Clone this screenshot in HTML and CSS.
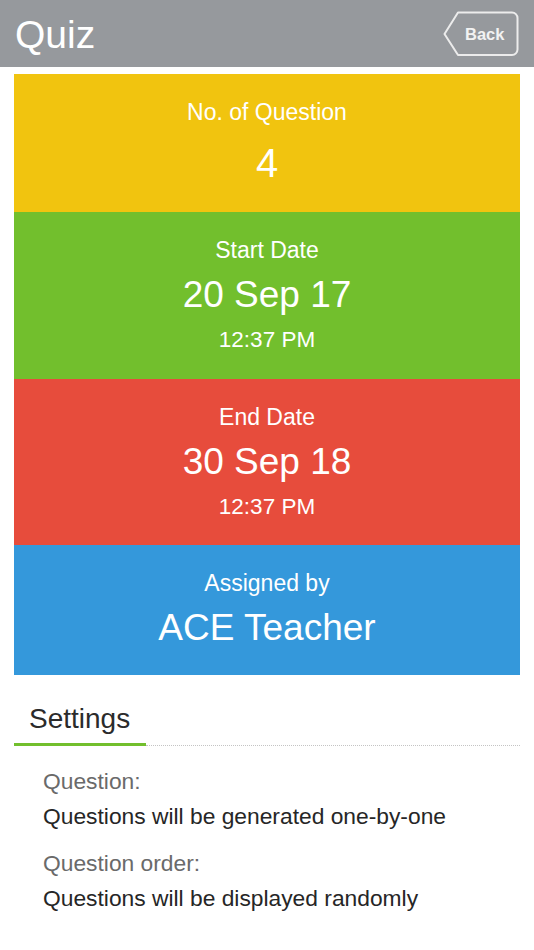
FILE: index.html
```html
<!DOCTYPE html>
<html>
<head>
<meta charset="utf-8">
<link rel="stylesheet" href="styles.css">
</head>
<body>
<header class="topbar">
  <h1 class="title">Quiz</h1>
  <div class="back">
    <svg class="back-shape" width="76" height="46" viewBox="0 0 76 46">
      <path d="M15 1.5 H69 a5.5 5.5 0 0 1 5.5 5.5 V38.5 a5.5 5.5 0 0 1 -5.5 5.5 H15 L1.5 23 Z" fill="none" stroke="#ececec" stroke-width="2" stroke-linejoin="round"/>
    </svg>
    <span class="back-text">Back</span>
  </div>
</header>
<main class="content">
  <section class="card card-yellow">
    <div class="card-label">No. of Question</div>
    <div class="card-value card-value-count">4</div>
  </section>
  <section class="card card-green">
    <div class="card-label">Start Date</div>
    <div class="card-value">20 Sep 17</div>
    <div class="card-time">12:37 PM</div>
  </section>
  <section class="card card-red">
    <div class="card-label">End Date</div>
    <div class="card-value">30 Sep 18</div>
    <div class="card-time">12:37 PM</div>
  </section>
  <section class="card card-blue">
    <div class="card-label">Assigned by</div>
    <div class="card-value">ACE Teacher</div>
  </section>

  <div class="tabs">
    <div class="tab">Settings</div>
    <div class="tab-filler"></div>
  </div>

  <div class="settings">
    <div class="setting">
      <div class="setting-label">Question:</div>
      <div class="setting-value">Questions will be generated one-by-one</div>
    </div>
    <div class="setting">
      <div class="setting-label">Question order:</div>
      <div class="setting-value">Questions will be displayed randomly</div>
    </div>
  </div>
</main>
</body>
</html>
```
FILE: styles.css
```css
* { box-sizing: border-box; }
html, body { margin: 0; padding: 0; background: #ffffff; }
body {
  font-family: "Liberation Sans", Arial, Helvetica, sans-serif;
  width: 534px;
  min-height: 950px;
}
.topbar {
  height: 67px;
  background: #96999d;
  display: flex;
  align-items: center;
  justify-content: space-between;
  padding: 0 15px 0 15px;
}
.title {
  margin: 2px 0 0 0;
  font-weight: normal;
  font-size: 39px;
  line-height: 44px;
  color: #ffffff;
}
.back {
  position: relative;
  width: 76px;
  height: 46px;
  display: flex;
  align-items: center;
  padding-left: 22px;
}
.back-shape {
  position: absolute;
  left: 0;
  top: 0;
}
.back-text {
  position: relative;
  font-size: 16.5px;
  font-weight: bold;
  color: #f2f2f2;
  line-height: 20px;
}
.content {
  padding: 7px 14px 0 14px;
}
.card {
  color: #ffffff;
  text-align: center;
  padding: 24px 0;
  display: flex;
  flex-direction: column;
  align-items: center;
}
.card-yellow { background: #f1c40f; padding-bottom: 28px; }
.card-green { background: #72bf2d; padding-bottom: 25px; }
.card-red { background: #e74c3c; }
.card-blue { background: #3498db; padding-bottom: 26px; }
.card-label {
  font-size: 23px;
  line-height: 28px;
}
.card-value {
  font-size: 37px;
  line-height: 42px;
  margin-top: 10px;
}
.card-value-count {
  font-size: 40px;
  margin-top: 16px;
}
.card-time {
  font-size: 22.5px;
  line-height: 28px;
  margin-top: 10px;
}
.tabs {
  display: flex;
  align-items: flex-end;
  margin-top: 27px;
}
.tab {
  width: 132px;
  padding: 0 0 8px 15px;
  font-size: 28px;
  line-height: 33px;
  color: #2b2b2b;
  border-bottom: 3px solid #72bf2d;
}
.tab-filler {
  flex: 1;
  border-bottom: 1px dotted #c4c4c4;
}
.settings {
  padding: 22px 0 0 29px;
  display: flex;
  flex-direction: column;
  gap: 21px;
}
.setting-label {
  font-size: 22.8px;
  line-height: 26px;
  color: #6a6a6a;
  margin-bottom: 9px;
}
.setting-value {
  font-size: 22.8px;
  line-height: 26px;
  color: #262626;
}
```
